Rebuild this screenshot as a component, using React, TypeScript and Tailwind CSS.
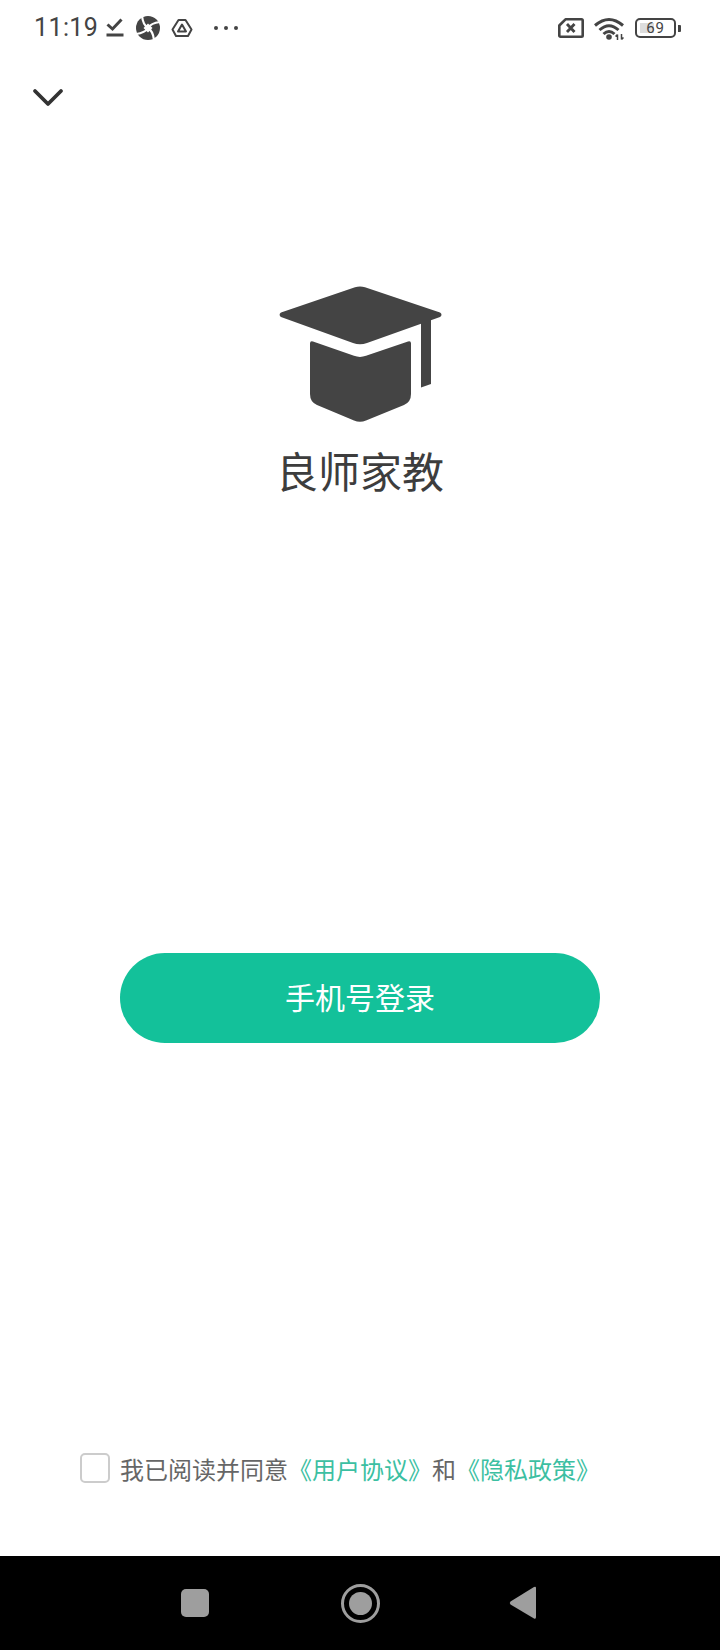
import React from 'react';

const CJK = "font-['Roboto','Noto_Sans_CJK_SC',sans-serif]";

function StatusBar() {
  return (
    <div className="h-[56px] flex items-center justify-between pl-[34px] pr-[39px] text-[#444444]">
      <div className="flex items-center">
        <span className="font-['Roboto',sans-serif] text-[25px] leading-[56px] tracking-[0.4px]">11:19</span>
        {/* download done */}
        <svg className="ml-[8px]" width="18" height="20" viewBox="0 0 18 20" fill="none">
          <path d="M1.5 6.5 L6.5 11 L15.5 1.5" stroke="#444444" strokeWidth="3" />
          <rect x="0.5" y="15.5" width="17" height="3" fill="#444444" />
        </svg>
        {/* round app badge */}
        <svg className="ml-[12px]" width="24" height="24" viewBox="0 0 24 24" fill="none">
          <circle cx="12" cy="12" r="12" fill="#444444" />
          <g stroke="#ffffff" strokeWidth="2.2" strokeLinecap="round">
            <path d="M12 12 Q7 9 6 0" />
            <path d="M12 12 Q15 7 24 6" />
            <path d="M12 12 Q17 15 18 24" />
            <path d="M12 12 Q9 17 0 18" />
          </g>
          <path d="M12 7.5 L16.5 12 L12 16.5 L7.5 12 Z" fill="#ffffff" />
        </svg>
        <svg className="ml-[11px]" width="22" height="20" viewBox="0 0 22 20" fill="none" stroke="#444444">
          <path d="M7.5 2 H14.5 L20.5 11.5 L17 18 H5 L1.5 11.5 Z" strokeWidth="2" strokeLinejoin="round" />
          <path d="M11 6.5 L15 13.5 H7 Z" strokeWidth="2" strokeLinejoin="round" />
        </svg>
        <div className="ml-[21px] flex items-center gap-[6px]">
          <span className="w-[4px] h-[4px] rounded-full bg-[#444444]" />
          <span className="w-[4px] h-[4px] rounded-full bg-[#444444]" />
          <span className="w-[4px] h-[4px] rounded-full bg-[#444444]" />
        </div>
      </div>
      <div className="flex items-center">
        {/* sim card with x */}
        <svg width="26" height="20" viewBox="0 0 26 20" fill="none">
          <path d="M7.5 1.3 H23.5 Q24.7 1.3 24.7 2.5 V17.5 Q24.7 18.7 23.5 18.7 H2.5 Q1.3 18.7 1.3 17.5 V7.5 Z" stroke="#444444" strokeWidth="2.6" strokeLinejoin="round" />
          <path d="M9 6 L16.5 14 M16.5 6 L9 14" stroke="#444444" strokeWidth="2.8" />
        </svg>
        {/* wifi */}
        <svg className="ml-[10px]" width="30" height="23" viewBox="0 0 30 23" fill="none">
          <path d="M1 8.5 Q15 -3.5 29 8.5" stroke="#444444" strokeWidth="3" />
          <path d="M5.5 13 Q15 4.5 24.5 13" stroke="#444444" strokeWidth="3" />
          <path d="M9.5 17 Q15 12 20.5 17" stroke="#444444" strokeWidth="3" />
          <circle cx="15" cy="20" r="2.8" fill="#444444" />
          <path d="M23.5 23 V17.5 M21.5 19.5 L23.5 17.5 M27.5 17 V22.5 M27.5 22.5 L29.5 20.5" stroke="#444444" strokeWidth="1.5" />
        </svg>
        {/* battery */}
        <div className="ml-[11px] flex items-center">
          <div className="relative w-[41px] h-[20px] rounded-[5px] border-2 border-[#444444] flex items-center justify-center overflow-hidden">
            <div className="absolute left-[3px] top-[3px] bottom-[3px] w-[14px] bg-[#dddddd]" />
            <span className="relative font-['Roboto',sans-serif] text-[15px] leading-none tracking-[0.8px]">69</span>
          </div>
          <div className="ml-[2px] w-[3px] h-[7px] rounded-r-[1px] bg-[#444444]" />
        </div>
      </div>
    </div>
  );
}

function CapLogo() {
  return (
    <svg className="ml-[2px]" width="164" height="137" viewBox="0 0 164 137" fill="#444444">
      <path d="M76 1.2 Q81 -0.4 86 1.2 L161 26.5 Q164 28.5 161 31 L88 57 Q81 59.5 74 57 L2 31 Q-0.8 28.5 2 26.5 Z" />
      <path d="M142 30 H152 V98 L142 101.5 Z" />
      <path d="M31 57.5 Q31 54.5 34 55.5 L75 69.8 Q81 72 87 69.8 L129 55.5 Q132 54.5 132 57.5 V108 Q132 116 125 119 L87 134.5 Q81 137 75 134.5 L38 119 Q31 116 31 108 Z" />
    </svg>
  );
}

export default function App() {
  return (
    <div className={`w-[720px] h-[1650px] bg-white flex flex-col ${CJK}`}>
      <StatusBar />

      <div className="h-[40px] pl-[32px] flex items-center mt-[22px]">
        <svg width="32" height="20" viewBox="0 0 32 20" fill="none">
          <path d="M3 3 L16 16 L29 3" stroke="#333333" strokeWidth="3.8" strokeLinecap="round" strokeLinejoin="round" />
        </svg>
      </div>

      <div className="mt-[168px] flex flex-col items-center">
        <CapLogo />
        <h1 className="mt-[21px] text-[42px] leading-[60px] font-normal text-[#3d3d3d]">良师家教</h1>
      </div>

      <button className="mt-[449px] mx-auto w-[480px] h-[90px] rounded-full bg-[#13c19a] text-white text-[30px]">
        手机号登录
      </button>

      <div className="mt-[410px] ml-[80px] flex items-start">
        <span className="w-[30px] h-[30px] rounded-[5px] border-2 border-[#cccccc] bg-white" />
        <p className="ml-[10px] text-[24px] leading-[36px] text-[#666666] whitespace-nowrap">
          我已阅读并同意<span className="text-[#3cbfa2]">《用户协议》</span>和<span className="text-[#3cbfa2]">《隐私政策》</span>
        </p>
      </div>

      <div className="mt-auto h-[94px] bg-black flex items-center pl-[181px]">
        <span className="w-[28px] h-[28px] rounded-[5px] bg-[#9e9e9e]" />
        <span className="ml-[132px] w-[39px] h-[39px] rounded-full border-[3px] border-[#9e9e9e] flex items-center justify-center">
          <span className="w-[23px] h-[23px] rounded-full bg-[#9e9e9e]" />
        </span>
        <svg className="ml-[129px]" width="28" height="34" viewBox="0 0 28 34" fill="#9e9e9e">
          <path d="M25 1 Q27 0 27 2 V31 Q27 33.5 25 32.5 L1.5 18.5 Q0 17 1.5 15.5 Z" />
        </svg>
      </div>
    </div>
  );
}
